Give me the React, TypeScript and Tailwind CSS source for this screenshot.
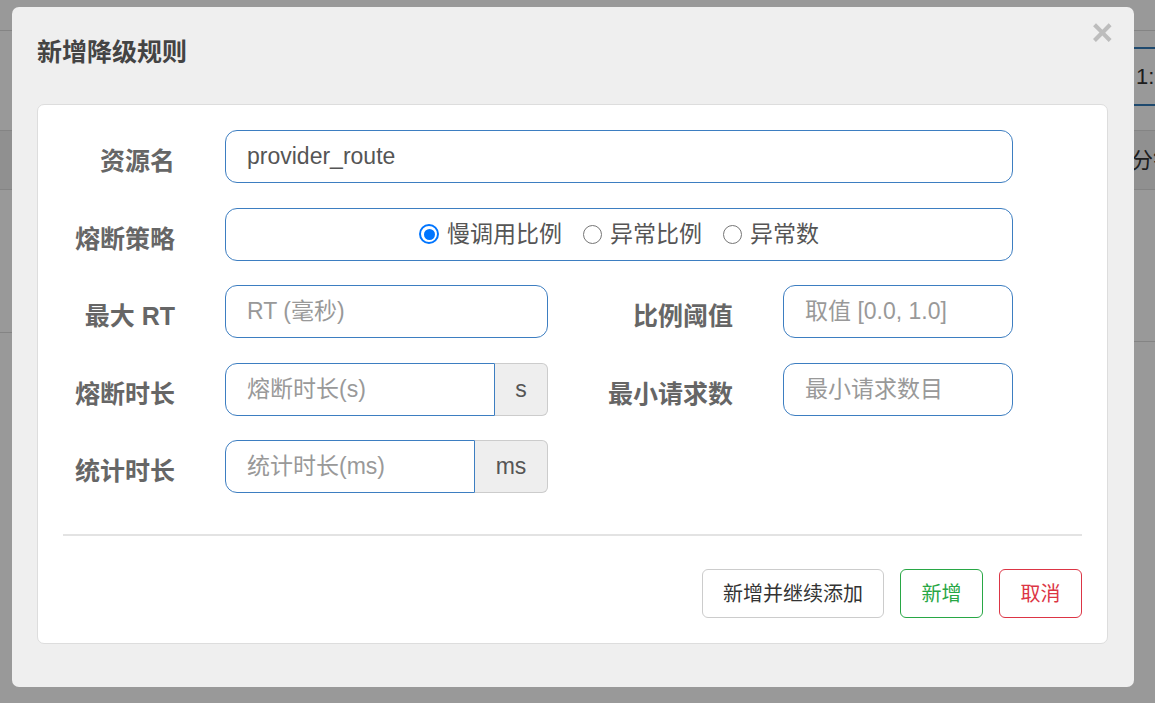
import React from 'react'

const FONT = "font-['Liberation_Sans','Noto_Sans_CJK_SC',sans-serif]"

function Label({ text, width }: { text: string; width: string }) {
  return (
    <div className={`${width} shrink-0 pt-[13px] text-right text-[25px] font-bold leading-[36px] text-[#666]`}>
      {text}
    </div>
  )
}

function TextInput({ placeholder, value, width, grouped }: { placeholder?: string; value?: string; width: string; grouped?: boolean }) {
  return (
    <input
      readOnly
      value={value}
      placeholder={placeholder}
      className={`${width} h-[53px] shrink-0 border border-[#3d7ec1] bg-white px-[21px] text-[23px] text-[#555] outline-none placeholder:text-[#999] ${
        grouped ? 'rounded-l-[12px]' : 'rounded-[12px]'
      } ${FONT}`}
    />
  )
}

function Addon({ text, width }: { text: string; width: string }) {
  return (
    <div className={`${width} flex h-[53px] shrink-0 items-center justify-center rounded-r-[6px] border border-l-0 border-[#ccc] bg-[#eee] text-[23px] text-[#555]`}>
      {text}
    </div>
  )
}

function Radio({ label, checked }: { label: string; checked?: boolean }) {
  return (
    <div className="flex items-center">
      {checked ? (
        <span className="flex h-[20px] w-[20px] items-center justify-center rounded-full border-2 border-[#0075ff] bg-white">
          <span className="h-[11px] w-[11px] rounded-full bg-[#0075ff]" />
        </span>
      ) : (
        <span className="h-[19px] w-[19px] rounded-full border-[1.5px] border-[#767676] bg-white" />
      )}
      <span className="ml-[8px] text-[23px] text-[#555]">{label}</span>
    </div>
  )
}

function BackgroundPage() {
  return (
    <div className={`h-[703px] w-full overflow-hidden bg-white ${FONT}`}>
      <div className="h-[31px] border-b border-[#ddd]" />
      <div className="flex h-[100px] border-b border-[#ddd]">
        <div className="w-[1134px] shrink-0" />
        <div className="mt-[16px] h-[59px] flex-1 overflow-hidden whitespace-nowrap border-y-2 border-[#337ab7] pl-[2px] text-[22px] leading-[55px] text-[#333]">
          1:1
        </div>
      </div>
      <div className="flex h-[59px] items-center border-b border-[#ddd] bg-[#f1f1f1]">
        <div className="w-[1131px] shrink-0" />
        <span className="whitespace-nowrap text-[22px] text-[#333]">分钟</span>
      </div>
      <div className="flex">
        <div className="h-[143px] flex-1 border-b border-[#ddd]" />
        <div className="h-[152px] w-[30px] border-b border-[#ddd]" />
      </div>
    </div>
  )
}

export default function App() {
  return (
    <div className="relative h-[703px] w-[1155px] overflow-hidden">
      <BackgroundPage />
      <div className={`fixed inset-0 bg-black/40 pl-[12px] pt-[7px] ${FONT}`}>
        <div className="relative h-[680px] w-[1122px] rounded-[7px] bg-[#efefef] px-[25px]">
          <div className="h-[97px] pt-[27px] text-[25px] font-bold leading-[36px] text-[#444]">新增降级规则</div>
          <span className="absolute right-[21px] top-[2px] text-[37px] font-bold leading-[48px] text-[#bdbdbd]">×</span>

          <div className="h-[540px] w-[1071px] rounded-[7px] border border-[#ddd] bg-white pt-[25px]">
            <div className="flex flex-col gap-[24.5px]">
              <div className="flex h-[53px]">
                <Label text="资源名" width="w-[137px]" />
                <div className="ml-[50px]">
                  <TextInput value="provider_route" width="w-[788px]" />
                </div>
              </div>

              <div className="flex h-[53px]">
                <Label text="熔断策略" width="w-[137px]" />
                <div className="ml-[50px] flex h-[53px] w-[788px] items-center justify-center gap-[21px] rounded-[12px] border border-[#3d7ec1]">
                  <Radio label="慢调用比例" checked />
                  <Radio label="异常比例" />
                  <Radio label="异常数" />
                </div>
              </div>

              <div className="flex h-[53px]">
                <Label text="最大 RT" width="w-[137px]" />
                <div className="ml-[50px]">
                  <TextInput placeholder="RT (毫秒)" width="w-[323px]" />
                </div>
                <Label text="比例阈值" width="w-[185px]" />
                <div className="ml-[50px]">
                  <TextInput placeholder="取值 [0.0, 1.0]" width="w-[230px]" />
                </div>
              </div>

              <div className="flex h-[53px]">
                <Label text="熔断时长" width="w-[137px]" />
                <div className="ml-[50px] flex">
                  <TextInput placeholder="熔断时长(s)" width="w-[270px]" grouped />
                  <Addon text="s" width="w-[53px]" />
                </div>
                <Label text="最小请求数" width="w-[185px]" />
                <div className="ml-[50px]">
                  <TextInput placeholder="最小请求数目" width="w-[230px]" />
                </div>
              </div>

              <div className="flex h-[53px]">
                <Label text="统计时长" width="w-[137px]" />
                <div className="ml-[50px] flex">
                  <TextInput placeholder="统计时长(ms)" width="w-[250px]" grouped />
                  <Addon text="ms" width="w-[73px]" />
                </div>
              </div>
            </div>

            <div className="mx-[25px] mt-[41px] h-[2px] bg-[#e3e3e3]" />

            <div className="mt-[33px] flex justify-end gap-[16px] px-[25px]">
              <button className="h-[49px] rounded-[6px] border border-[#ccc] bg-white px-[20px] text-[20px] text-[#333]">
                新增并继续添加
              </button>
              <button className="h-[49px] w-[83px] rounded-[6px] border border-[#28a745] bg-white text-[20px] text-[#28a745]">
                新增
              </button>
              <button className="h-[49px] w-[83px] rounded-[6px] border border-[#dc3545] bg-white text-[20px] text-[#dc3545]">
                取消
              </button>
            </div>
          </div>
        </div>
      </div>
    </div>
  )
}
